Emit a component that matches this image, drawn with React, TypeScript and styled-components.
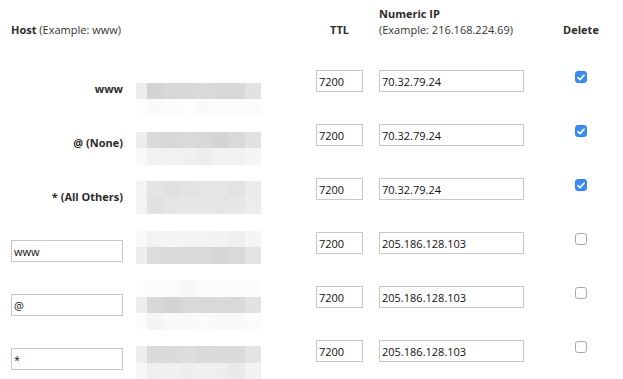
import React from "react";
import styled, { createGlobalStyle } from "styled-components";

const Global = createGlobalStyle`
  html, body { margin: 0; padding: 0; background: #fff; overflow: hidden; }
  body { font-family: "Open Sans", "Liberation Sans", sans-serif; color: #333; }
`;

const Page = styled.div`
  padding: 0 0 0 11px;
  width: 623px;
  height: 379px;
  box-sizing: border-box;
`;

const Grid = styled.div`
  display: grid;
  grid-template-columns: 125px 180px 63px 161px 82px;
`;

const HeaderRow = styled(Grid)`
  height: 38px;
  align-items: end;
  margin-bottom: 32px;
  font-size: 11px;
  line-height: 16px;
`;

const HeadCell = styled.div<{ $align?: string }>`
  font-weight: 700;
  color: #2b2b2b;
  white-space: nowrap;
  text-align: ${(p) => p.$align || "left"};
  width: ${(p) => (p.$align === "center" ? "100%" : "auto")};
`;

const TtlHead = styled(HeadCell)`
  width: 47px;
`;

const Example = styled.span`
  font-weight: 400;
  font-size: 11px;
  color: #333;
`;

const Row = styled(Grid)`
  height: 54px;
  align-items: start;
`;

const HostLabel = styled.div`
  width: 112px;
  padding-top: 11px;
  text-align: right;
  font-weight: 700;
  font-size: 11px;
  line-height: 16px;
  color: #2b2b2b;
`;

const Field = styled.input<{ $w: number }>`
  box-sizing: border-box;
  width: ${(p) => p.$w}px;
  height: 22px;
  margin: 0;
  padding: 0 0 0 2px;
  border: 1px solid #c8c8c8;
  border-radius: 0;
  font-family: "Open Sans", "Liberation Sans", sans-serif;
  font-size: 11px;
  color: #111;
  background: #fff;
  outline: none;
`;

const HostField = styled(Field)`
  margin-top: 8px;
`;

const Blur = styled.div<{ $offset: number }>`
  width: 125px;
  margin-top: ${(p) => p.$offset}px;
  display: flex;
  flex-direction: column;
`;

const Band = styled.div<{ $h: number }>`
  display: grid;
  grid-template-columns: 11px 16px 17px 16px 16px 16px 17px 16px;
  height: ${(p) => p.$h}px;
`;

const Cell = styled.div<{ $c: string }>`
  background: ${(p) => p.$c};
`;

const CheckCell = styled.div`
  display: flex;
  justify-content: center;
  padding-top: 1px;
`;

const Box = styled.span<{ $on: boolean }>`
  box-sizing: border-box;
  width: 12px;
  height: 12px;
  border-radius: 3px;
  display: flex;
  align-items: center;
  justify-content: center;
  background: ${(p) => (p.$on ? "#3b8bf2" : "#fff")};
  border: 1px solid ${(p) => (p.$on ? "#3482ec" : "#a9a9a9")};
`;

const hex = (v: number) => {
  const n = Math.max(0, Math.min(255, Math.round(v)));
  const h = n.toString(16).padStart(2, "0");
  return `#${h}${h}${h}`;
};

const pattern = [0, -4, 0, 1, 2, 0, 1, 0];

const shadeRow = (base: number, seed: number) =>
  pattern.map((d, i) => {
    if (i === 0) return hex(base + (255 - base) * 0.55);
    if (i === 7) return hex(base + (255 - base) * 0.25);
    const j = (i + seed) % 7;
    return hex(base + pattern[j] + (seed % 2 ? 1 : -1) * (i % 3 === 0 ? 1 : 0));
  });

type RowData = {
  label?: string;
  host?: string;
  ip: string;
  checked: boolean;
  blurOffset: number;
  bands: { base: number; h: number }[];
};

const rows: RowData[] = [
  { label: "www", ip: "70.32.79.24", checked: true, blurOffset: 13, bands: [{ base: 216, h: 16 }, { base: 250, h: 16 }] },
  { label: "@ (None)", ip: "70.32.79.24", checked: true, blurOffset: 8, bands: [{ base: 216, h: 16 }, { base: 241, h: 17 }] },
  { label: "* (All Others)", ip: "70.32.79.24", checked: true, blurOffset: 3, bands: [{ base: 228, h: 16 }, { base: 229, h: 17 }] },
  { host: "www", ip: "205.186.128.103", checked: false, blurOffset: -1, bands: [{ base: 242, h: 16 }, { base: 218, h: 17 }] },
  { host: "@", ip: "205.186.128.103", checked: false, blurOffset: -6, bands: [{ base: 251, h: 17 }, { base: 216, h: 16 }, { base: 249, h: 17 }] },
  { host: "*", ip: "205.186.128.103", checked: false, blurOffset: 6, bands: [{ base: 218, h: 17 }, { base: 238, h: 16 }] },
];

const Tick = () => (
  <svg width="8" height="7" viewBox="0 0 8 7" aria-hidden="true">
    <path d="M1 3.6 L3.1 5.6 L7 1.2" fill="none" stroke="#fff" strokeWidth="1.6" strokeLinecap="round" strokeLinejoin="round" />
  </svg>
);

export default function App() {
  return (
    <Page>
      <Global />
      <HeaderRow>
        <HeadCell>
          Host <Example>(Example: www)</Example>
        </HeadCell>
        <div />
        <TtlHead $align="center">TTL</TtlHead>
        <HeadCell>
          Numeric IP
          <br />
          <Example>(Example: 216.168.224.69)</Example>
        </HeadCell>
        <HeadCell $align="center">Delete</HeadCell>
      </HeaderRow>
      {rows.map((r, idx) => (
        <Row key={idx}>
          {r.label ? (
            <HostLabel>{r.label}</HostLabel>
          ) : (
            <HostField $w={112} defaultValue={r.host} />
          )}
          <Blur $offset={r.blurOffset}>
            {r.bands.map((b, bi) => (
              <Band key={bi} $h={b.h}>
                {shadeRow(b.base, idx * 3 + bi).map((c, ci) => (
                  <Cell key={ci} $c={c} />
                ))}
              </Band>
            ))}
          </Blur>
          <Field $w={47} defaultValue="7200" />
          <Field $w={145} defaultValue={r.ip} />
          <CheckCell>
            <Box $on={r.checked}>{r.checked && <Tick />}</Box>
          </CheckCell>
        </Row>
      ))}
    </Page>
  );
}
